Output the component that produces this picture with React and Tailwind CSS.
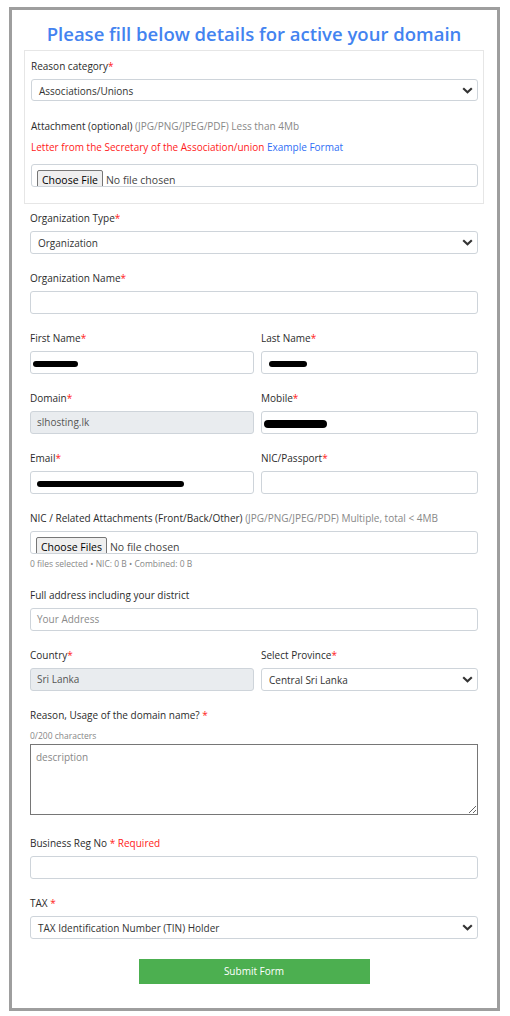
import React from 'react';

const Star = ({ space }) => (
  <span className="text-[#ff1a1a]">{space ? ' *' : '*'}</span>
);

const Label = ({ children, req, space, className = '' }) => (
  <div className={`text-[10px] leading-[17px] text-[#2b2b2b] mb-[4px] ${className}`}>
    {children}
    {req && <Star space={space} />}
  </div>
);

const Chevron = () => (
  <svg width="11" height="7" viewBox="0 0 11 7" className="shrink-0">
    <path d="M1.2 1.2 L5.5 5.3 L9.8 1.2" fill="none" stroke="#333" strokeWidth="2.1" />
  </svg>
);

const SelectBox = ({ value, h = 'h-[23px]' }) => (
  <div className={`${h} w-full border border-[#ced4da] rounded-[3px] bg-white flex items-center justify-between pl-[7px] pr-[4px]`}>
    <span className="text-[10px] text-[#333] pt-[2px]">{value}</span>
    <Chevron />
  </div>
);

const TextInput = ({ placeholder, disabled, value, children }) => (
  <div
    className={`relative h-[23px] w-full border border-[#ced4da] rounded-[3px] flex items-center px-[6px] text-[10px] ${
      disabled ? 'bg-[#e9ecef] text-[#555]' : 'bg-white text-[#333]'
    }`}
  >
    {value && <span>{value}</span>}
    {placeholder && <span className="text-[#8a8a8a]">{placeholder}</span>}
    {children}
  </div>
);

// black marker used to hide personal data in the screenshot
const Scribble = ({ className }) => (
  <div className={`absolute bg-black rounded-full ${className}`}></div>
);

const FileInput = ({ label }) => (
  <div className="h-[23px] w-full border border-[#ced4da] rounded-[3px] bg-white overflow-hidden flex items-start pt-[5px] pl-[5px]">
    <div className="h-[20px] shrink-0 whitespace-nowrap bg-[#efefef] border border-[#767676] rounded-[2px] text-[10.5px] leading-[14px] pt-[2px] text-black px-[4px]">
      {label}
    </div>
    <span className="whitespace-nowrap text-[10.5px] leading-[14px] text-[#444] pl-[3px] pt-[3px]">No file chosen</span>
  </div>
);

const Field = ({ label, req, space, children, className = '' }) => (
  <div className={`mb-[16px] ${className}`}>
    <Label req={req} space={space}>{label}</Label>
    {children}
  </div>
);

export default function App() {
  return (
    <div className="min-h-screen bg-white pt-[7px] pl-[9px] font-['Open_Sans',sans-serif]">
      <div className="w-[491px] border-[3px] border-[#9e9e9e] pl-[12px] pr-[13px] pb-[24px]">
        <h1 className="text-center text-[18.5px] leading-[28px] font-semibold text-[#4383f0] pt-[10px] pb-[2px]">
          Please fill below details for active your domain
        </h1>

        {/* reason category block */}
        <div className="border border-[#e6e6e6] pl-[6px] pr-[5px] pt-[7px] pb-[16px]">
          <Label req className="mb-[3px]">Reason category</Label>
          <SelectBox value="Associations/Unions" h="h-[22px]" />
          <div className="mt-[17px] text-[10px] leading-[16px] text-[#2b2b2b]">
            Attachment (optional) <span className="text-[#888]">(JPG/PNG/JPEG/PDF) Less than 4Mb</span>
          </div>
          <div className="mt-[5px] text-[10px] leading-[16px] text-[#ff1a1a]">
            Letter from the Secretary of the Association/union{' '}
            <span className="text-[#2f6ef5]">Example Format</span>
          </div>
          <div className="mt-[9px]">
            <FileInput label="Choose File" />
          </div>
        </div>

        <div className="pl-[6px] pr-[6px] pt-[6px]">
          <Field label="Organization Type" req>
            <SelectBox value="Organization" />
          </Field>
          <Field label="Organization Name" req>
            <TextInput />
          </Field>

          <div className="grid grid-cols-[224px_1fr] gap-x-[7px]">
            <Field label="First Name" req>
              <TextInput>
                <Scribble className="left-[2px] top-[9px] w-[45px] h-[6px]" />
              </TextInput>
            </Field>
            <Field label="Last Name" req>
              <TextInput>
                <Scribble className="left-[7px] top-[9px] w-[38px] h-[6px]" />
              </TextInput>
            </Field>
            <Field label="Domain" req>
              <TextInput disabled value="slhosting.lk" />
            </Field>
            <Field label="Mobile" req>
              <TextInput>
                <Scribble className="left-[2px] top-[8px] w-[63px] h-[8px]" />
              </TextInput>
            </Field>
            <Field label="Email" req>
              <TextInput>
                <Scribble className="left-[6px] top-[9px] w-[147px] h-[6px]" />
              </TextInput>
            </Field>
            <Field label="NIC/Passport" req>
              <TextInput />
            </Field>
          </div>

          <div className="mb-[16px]">
            <Label>
              NIC / Related Attachments (Front/Back/Other){' '}
              <span className="text-[#888]">(JPG/PNG/JPEG/PDF) Multiple, total &lt; 4MB</span>
            </Label>
            <FileInput label="Choose Files" />
            <div className="mt-[3px] text-[8.5px] leading-[14px] text-[#888]">
              0 files selected • NIC: 0 B • Combined: 0 B
            </div>
          </div>

          <Field label="Full address including your district">
            <TextInput placeholder="Your Address" />
          </Field>

          <div className="grid grid-cols-[224px_1fr] gap-x-[7px]">
            <Field label="Country" req>
              <TextInput disabled value="Sri Lanka" />
            </Field>
            <Field label="Select Province" req>
              <SelectBox value="Central Sri Lanka" />
            </Field>
          </div>

          <div className="mb-[20px]">
            <Label req space className="mb-0">Reason, Usage of the domain name?</Label>
            <div className="mt-[5px] mb-[1px] text-[8.5px] leading-[14px] text-[#888]">0/200 characters</div>
            <textarea
              placeholder="description"
              className="block w-full h-[71px] border border-[#767676] px-[5px] py-[5px] text-[10px] text-[#333] placeholder:text-[#888] outline-none"
            ></textarea>
          </div>

          <Field label={<>Business Reg No <span className="text-[#ff1a1a]">* Required</span></>}>
            <TextInput />
          </Field>

          <Field label="TAX" req space className="mb-[20px]">
            <SelectBox value="TAX Identification Number (TIN) Holder" />
          </Field>

          <div className="flex justify-center">
            <button className="w-[231px] h-[25px] bg-[#4caf50] text-white text-[10px] font-medium">
              Submit Form
            </button>
          </div>
        </div>
      </div>
    </div>
  );
}
